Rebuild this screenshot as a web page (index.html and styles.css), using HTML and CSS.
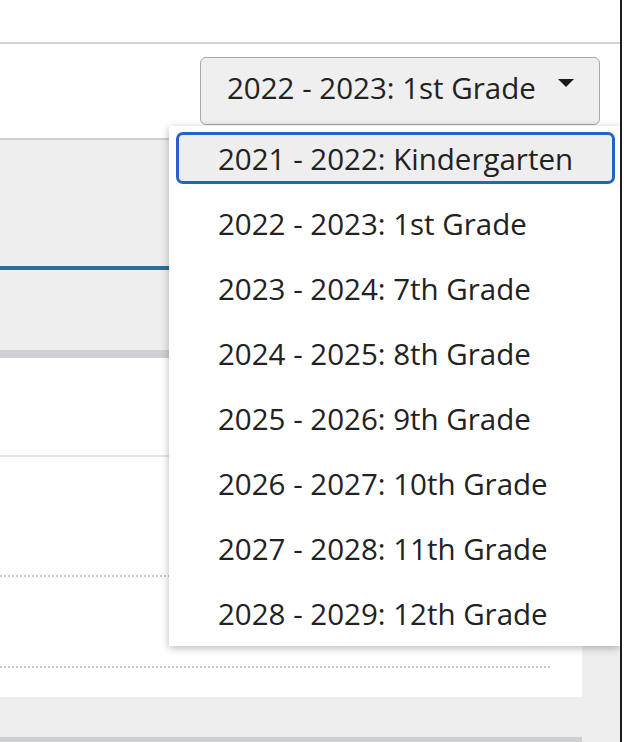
FILE: index.html
```html
<!DOCTYPE html>
<html lang="en">
<head>
<meta charset="utf-8">
<title>Grade selector</title>
<link rel="stylesheet" href="styles.css">
</head>
<body>
<div class="window">
  <header class="topbar"></header>
  <div class="toolbar">
    <button class="select" type="button">
      <span class="select-label">2022 - 2023: 1st Grade</span>
      <span class="caret"></span>
    </button>
  </div>
  <div class="content">
    <div class="main">
      <div class="tabs">
        <div class="tab-strip"></div>
        <div class="tab-underline"></div>
      </div>
      <section class="card">
        <div class="row row-first"></div>
        <div class="row row-second"></div>
        <div class="row row-third"></div>
        <div class="row row-last"></div>
      </section>
      <div class="gap"></div>
      <section class="card card-next"></section>
    </div>
  </div>
  <ul class="menu">
    <li class="option focused">2021 - 2022: Kindergarten</li>
    <li class="option">2022 - 2023: 1st Grade</li>
    <li class="option">2023 - 2024: 7th Grade</li>
    <li class="option">2024 - 2025: 8th Grade</li>
    <li class="option">2025 - 2026: 9th Grade</li>
    <li class="option">2026 - 2027: 10th Grade</li>
    <li class="option">2027 - 2028: 11th Grade</li>
    <li class="option">2028 - 2029: 12th Grade</li>
  </ul>
</div>
</body>
</html>
```

FILE: styles.css
```css
html, body {
  margin: 0;
  padding: 0;
  background: #ffffff;
}

body {
  font-family: "Open Sans", "Noto Sans", sans-serif;
  color: #222222;
}

.window {
  position: relative;
  width: 620px;
  height: 742px;
  overflow: hidden;
  border-right: 2px solid #1c1c1c;
  background: #ffffff;
}

.topbar {
  height: 42px;
  border-bottom: 2px solid #d2d2d6;
}

.toolbar {
  height: 96px;
  box-sizing: border-box;
  border-bottom: 2px solid #d0d0d4;
  display: flex;
  justify-content: flex-end;
  align-items: flex-start;
  padding: 13px 20px 0 0;
}

.select {
  width: 400px;
  height: 68px;
  box-sizing: border-box;
  border: 1.5px solid #a8a8a8;
  border-radius: 6px;
  background: #efefef;
  padding: 0 25px 8px 26px;
  display: flex;
  align-items: center;
  justify-content: space-between;
  font-family: "Open Sans", "Noto Sans", sans-serif;
  font-size: 29.5px;
  color: #222222;
  cursor: pointer;
}

.select-label {
  white-space: nowrap;
}

.caret {
  width: 0;
  height: 0;
  border-left: 8.5px solid transparent;
  border-right: 8.5px solid transparent;
  border-top: 8px solid #1a1a1a;
  margin-bottom: 8px;
}

.content {
  background: #eeeeee;
  height: 602px;
}

.main {
  width: 582px;
}

.tabs {
  height: 210px;
}

.tab-strip {
  height: 126px;
}

.tab-underline {
  height: 4px;
  background: #2e6e99;
}

.card {
  background: #ffffff;
  border-top: 8px solid #cfd0d4;
}

.row-first {
  height: 97px;
  border-bottom: 2px solid #e6e6e6;
}

.row-second {
  height: 118px;
}

.row-third {
  height: 91px;
}

.row-last {
  height: 31px;
}

.row-third::before,
.row-last::before {
  content: "";
  display: block;
  height: 2px;
  margin-right: 30px;
  background-image: linear-gradient(to right, #c8c8c8 50%, transparent 50%);
  background-size: 4px 2px;
}

.gap {
  height: 40px;
}

.card-next {
  height: 20px;
  border-top-width: 6px;
}

.menu {
  position: absolute;
  left: 169px;
  top: 126px;
  right: 0;
  margin: 0;
  padding: 0;
  list-style: none;
  background: #ffffff;
  box-shadow: 0 2px 8px rgba(0, 0, 0, 0.28);
}

.option {
  height: 65px;
  box-sizing: border-box;
  display: flex;
  align-items: center;
  padding-left: 49px;
  font-size: 29.5px;
  color: #222222;
  white-space: nowrap;
}

.option.focused {
  height: 52px;
  margin: 6px 5px 7px 7px;
  padding-left: 39px;
  border: 3px solid #2563c9;
  border-radius: 7px;
  background: #eeeeee;
}
```
